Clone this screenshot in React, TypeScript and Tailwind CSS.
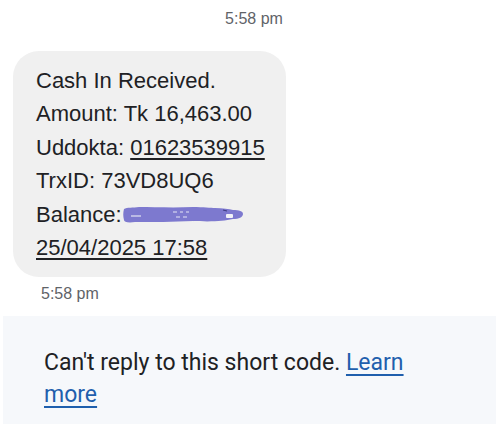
export default function App() {
  return (
    <div className="w-[496px] h-[424px] bg-white overflow-hidden flex flex-col" style={{ fontFamily: '"Liberation Sans", Arial, sans-serif' }}>
      <div className="shrink-0 pt-[7px] h-[51px] text-center">
        <span className="text-[16px] leading-[22px] text-[#5f6368] pl-[12px]">5:58 pm</span>
      </div>
      <div className="shrink-0 ml-[13px] w-[273px] rounded-[26px] bg-[#f0f0f0] pl-[23px] pr-[10px] pt-[13px] pb-[13px] text-[22px] leading-[33.4px] text-[#202124] whitespace-nowrap">
        <div>Cash In Received.</div>
        <div>Amount: Tk 16,463.00</div>
        <div>
          Uddokta: <span className="underline underline-offset-[3px] decoration-[1.5px]">01623539915</span>
        </div>
        <div>TrxID: 73VD8UQ6</div>
        <div className="flex items-center">
          <span>Balance:</span>
          <span className="relative inline-block w-[120px] h-[20px]">
            <svg width="122" height="20" viewBox="0 0 122 20" className="absolute left-[1px] top-[1px]">
              <path d="M1 4 C4 2 10 3 16 2 C30 2 50 3 70 2 C80 2 88 3 92 3 C100 3 106 4 110 5 C116 5 120 6 120 9 C120 12 116 14 110 14 C100 16 90 17 70 16 C50 17 30 17 12 17 C5 18 1 17 1 15 C0 11 0 8 1 4 Z" fill="#7d79cf" />
              <path d="M8 11 L18 11" stroke="#dcdcf0" strokeWidth="1.3" />
              <path d="M50 7 L54 7 M57 7 L60 7 M63 7 L66 7 M53 12 L57 12 M60 12 L64 12" stroke="#e6e6f6" strokeWidth="1.1" />
              <path d="M100 5 L104 6" stroke="#3e3a80" strokeWidth="1.2" />
              <rect x="103" y="9" width="7" height="4" rx="1" fill="#f2f2f8" />
            </svg>
          </span>
        </div>
        <div>
          <span className="underline underline-offset-[3px] decoration-[1.5px]">25/04/2025 17:58</span>
        </div>
      </div>
      <div className="shrink-0 pl-[41px] pt-[6px] h-[39px] text-[16px] leading-[22px] text-[#5f6368]">5:58 pm</div>
      <div className="ml-[3px] flex-1 bg-[#f6f8fb] pl-[41px] pr-[10px] pt-[31px] text-[23px] leading-[32px] text-[#202124]" style={{ fontFamily: 'Roboto, "Liberation Sans", sans-serif' }}>
        <div>
          Can't reply to this short code.{' '}
          <span className="text-[#1f5fad] underline underline-offset-[4px] decoration-[2px]">Learn</span>
        </div>
        <div>
          <span className="text-[#1f5fad] underline underline-offset-[4px] decoration-[2px]">more</span>
        </div>
      </div>
    </div>
  );
}
